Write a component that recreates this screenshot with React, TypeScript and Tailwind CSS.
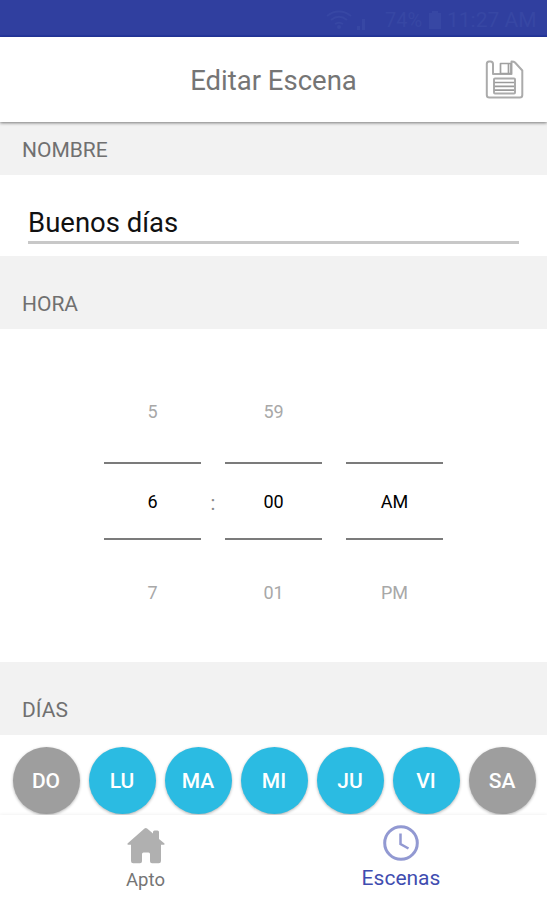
import clsx from 'clsx';

interface SectionHeaderProps {
	title: string;
	className?: string;
}

interface PickerColumnProps {
	prev?: string;
	value: string;
	next: string;
}

interface Day {
	label: string;
	active: boolean;
}

const DAYS: Day[] = [
	{ label: 'DO', active: false },
	{ label: 'LU', active: true },
	{ label: 'MA', active: true },
	{ label: 'MI', active: true },
	{ label: 'JU', active: true },
	{ label: 'VI', active: true },
	{ label: 'SA', active: false },
];

const StatusBar = () => {
	return (
		<div className="flex h-[37px] shrink-0 items-center justify-end border-b-2 border-[#2638a0] bg-[#303f9f] pt-[5px] pr-[10px] text-[#3747a4]">
			<svg width="28" height="22" viewBox="0 0 28 22" fill="none" stroke="currentColor" strokeWidth="2">
				<path d="M2 7C9 1 19 1 26 7M6 11c5-4 11-4 16 0M10 15c3-2 5-2 8 0" />
				<circle cx="14" cy="18" r="1" fill="currentColor" />
			</svg>
			<svg className="mt-2 ml-1" width="8" height="12" viewBox="0 0 8 12" fill="currentColor">
				<path d="M0 8h3v4H0zM5 1h3v11H5z" />
			</svg>
			<span className="ml-[20px] w-[38px] text-[20px] leading-6">74%</span>
			<svg className="ml-[6px]" width="12" height="18" viewBox="0 0 12 18" fill="currentColor">
				<path d="M3 0h6v2h3v16H0V2h3z" />
			</svg>
			<span className="ml-[6px] w-[90px] text-[21px] leading-6 whitespace-nowrap">11:27 AM</span>
		</div>
	);
};

const SaveIcon = () => {
	return (
		<svg width="39" height="39" viewBox="0 0 39 39" fill="none" stroke="#ababab" strokeWidth="2" strokeLinejoin="round">
			<path d="M8 14V4Q8 1.500 5.500 1.500H4Q1.800 1.500 1.800 4v31q0 2.500 2.500 2.500h30.500q2.500 0 2.500-2.500V10.500L30 2.500Q29 1.500 26.500 1.500V14Z" />
			<path d="M15.500 13.500v-10h10.500v10ZM23.500 4v9" stroke="#a0a0a0" strokeWidth="1.700" />
			<rect x="9" y="18.500" width="21" height="15" rx="1" />
			<path d="M9.500 22.500H29M9.500 26.300H29M9.500 30.200H29" stroke="#9a9a9a" strokeWidth="1.700" />
		</svg>
	);
};

const SectionHeader = ({ title, className }: SectionHeaderProps) => {
	return (
		<h2
			className={clsx(
				'flex shrink-0 items-center bg-[#f2f2f2] pl-[22px] text-[21px] leading-6 text-[#707070]',
				className
			)}
		>
			{title}
		</h2>
	);
};

const PickerColumn = ({ prev, value, next }: PickerColumnProps) => {
	return (
		<div className="flex w-[97px] flex-col text-center text-[18px] leading-6 text-[#a8a8a8]">
			<span className="h-[62px]">{prev}</span>
			<span className="flex h-[78px] items-center justify-center border-y-[2.500px] border-[#7b7b7b] pt-[2px] text-black">
				{value}
			</span>
			<span className="pt-[41px]">{next}</span>
		</div>
	);
};

const App = () => {
	return (
		<div className="flex h-[900px] w-[547px] flex-col overflow-hidden bg-white font-['Roboto','Liberation_Sans',sans-serif]">
			<StatusBar />

			<header className="relative flex h-[85px] shrink-0 items-center justify-center bg-white pt-[3px] shadow-[0_1px_3px_rgba(0,0,0,0.5)]">
				<h1 className="text-[27.5px] leading-9 text-[#757575]">Editar Escena</h1>
				<button className="absolute top-[23px] right-[23px]" aria-label="Guardar">
					<SaveIcon />
				</button>
			</header>

			<SectionHeader title="NOMBRE" className="h-[53px] pt-[2px]" />
			<div className="h-[81px] shrink-0 px-7 pt-[26px]">
				<div className="h-[43px] border-b-[3px] border-[#c8c8c8] pt-px text-[27.5px] leading-[42px] text-[#111]">
					Buenos días
				</div>
			</div>

			<SectionHeader title="HORA" className="h-[73px] pt-[23px]" />
			<div className="flex h-[333px] shrink-0 justify-center pt-[71px]">
				<PickerColumn prev="5" value="6" next="7" />
				<span className="w-6 pt-[91px] text-center text-[20px] leading-6 text-[#8a8a8a]">:</span>
				<PickerColumn prev="59" value="00" next="01" />
				<span className="w-6" />
				<PickerColumn value="AM" next="PM" />
			</div>

			<SectionHeader title="DÍAS" className="h-[73px] pt-[23px]" />
			<div className="flex h-20 shrink-0 justify-center gap-[9px] overflow-hidden pt-3 pl-px">
				{DAYS.map(({ label, active }) => (
					<button
						key={label}
						className={clsx(
							'size-[67px] shrink-0 rounded-full pt-[3px] text-[21px] font-medium text-white shadow-[0_1px_3px_rgba(0,0,0,0.3)]',
							active ? 'bg-[#2bbbe2]' : 'bg-[#9e9e9e]'
						)}
					>
						{label}
					</button>
				))}
			</div>

			<nav className="relative flex h-[85px] shrink-0 bg-white pl-[18px] shadow-[0_-1px_3px_rgba(0,0,0,0.05)]">
				<a className="flex w-[255px] flex-col items-center pt-[12px] text-[18.5px] leading-6 text-[#757575]">
					<svg width="38" height="38" viewBox="0 0 38 38" fill="#b0b0b0">
						<path d="M17.500 1.500q1.300-1 2.600 0L26 6.500V5q0-1.500 1.500-1.500h3Q32 3.500 32 5v7l5.500 4.500q.5 1.200-.8 1.200H34V34q0 2.200-2.200 2.200H25q-2 0-2-2V27q0-1.500-1.500-1.500h-5Q15 25.500 15 27v7.200q0 2-2 2H6.200Q4 36.200 4 34V17.700H1.300q-1.300 0-.8-1.200Z" />
					</svg>
					<span className="mt-[3px]">Apto</span>
				</a>
				<a className="flex w-[256px] flex-col items-center pt-[9px] text-[21px] leading-6 text-[#3f4db0]">
					<svg width="38" height="38" viewBox="0 0 38 38" fill="none" stroke="#9299d2" strokeWidth="3">
						<circle cx="19" cy="19" r="16.3" />
						<path d="M18.5 9.500V20l8 4.500" strokeWidth="2.500" />
					</svg>
					<span className="mt-[4px]">Escenas</span>
				</a>
			</nav>
		</div>
	);
};

export default App;
